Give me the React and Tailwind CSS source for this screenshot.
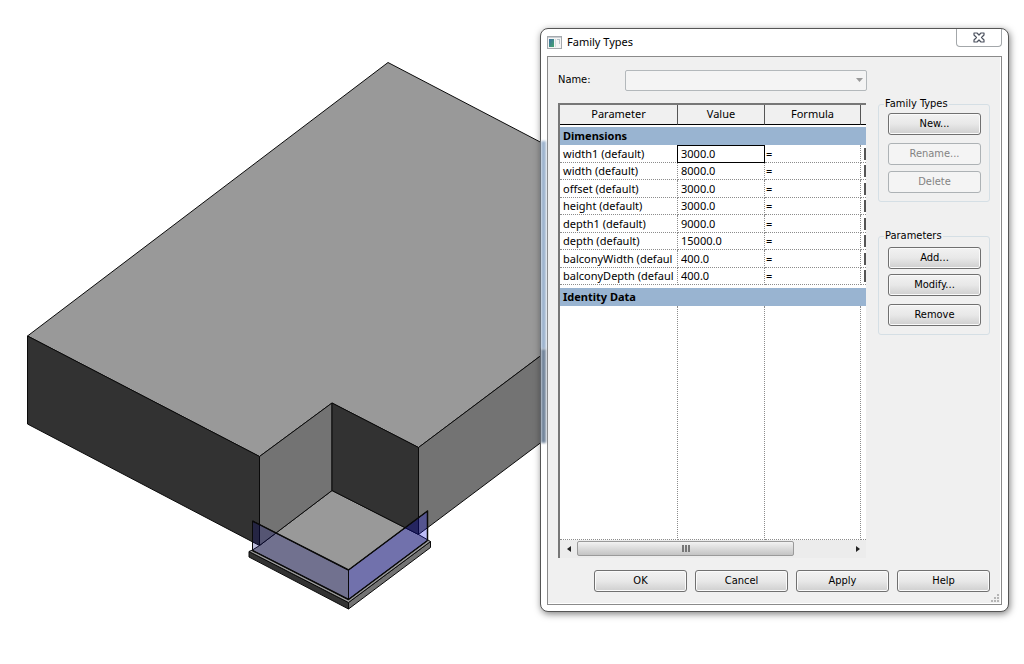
import React from "react";

const parameters = [
  ["width1 (default)", "3000.0"],
  ["width (default)", "8000.0"],
  ["offset (default)", "3000.0"],
  ["height (default)", "3000.0"],
  ["depth1 (default)", "9000.0"],
  ["depth (default)", "15000.0"],
  ["balconyWidth (defaul", "400.0"],
  ["balconyDepth (defaul", "400.0"],
];

function ModelView() {
  return (
    <svg viewBox="0 0 540 664" className="block w-full" role="img" aria-label="Building mass with corner balcony">
      <g stroke="#0a0a0a" strokeWidth="1" strokeLinejoin="round">
        <polygon points="388,62.5 27.5,336 259.5,456.5 332,403 418.5,447.5 545,352.5 545,144.5" fill="#999999" />
        <polygon points="27.5,336 259.5,456.5 259.5,545.5 27.5,424" fill="#323232" />
        <polygon points="418.5,447.5 545,352.5 545,439.5 418.5,534.5" fill="#737373" />
        <polygon points="249,551.5 348.5,602.5 348.5,609 249,557" fill="#323232" />
        <polygon points="348.5,602.5 430.5,541.5 430.5,547.5 348.5,609" fill="#737373" />
        <polygon points="249,551.5 252.5,550 259.5,545.5 332,490.5 418.5,534.5 430.5,541.5 348.5,602.5" fill="#999999" />
        <polygon points="259.5,456.5 332,403 332,490.5 259.5,545.5" fill="#737373" />
        <polygon points="332,403 418.5,447.5 418.5,534.5 332,490.5" fill="#323232" />
        <polygon points="252.5,521 348.5,570 348.5,599.5 252.5,550.5" fill="#000073" fillOpacity="0.26" />
        <polygon points="348.5,570 427.5,511 427.5,540.5 348.5,599.5" fill="#0000e5" fillOpacity="0.26" />
        <path d="M252.5 521 348.5 570 427.5 511V540M252.5 550.5 348.5 599.5 427.5 540.5" fill="none" strokeWidth="1.5" />
      </g>
    </svg>
  );
}

function PushButton({ children, disabled, className = "" }) {
  const look = disabled
    ? "border-[#adb2b5] bg-[#f4f4f4] text-[#838383]"
    : "border-[#707070] bg-linear-to-b from-[#f2f2f2] via-[#e8e8e8] to-[#cfcfcf] text-black shadow-[inset_0_0_0_1px_#fafafa]";
  return (
    <button
      type="button"
      disabled={disabled}
      className={`flex h-[22px] items-center justify-center rounded-[3px] border text-[11px] leading-4 ${look} ${className}`}
    >
      {children}
    </button>
  );
}

function Band({ children }) {
  return (
    <tr className="h-5">
      <th colSpan={4} scope="colgroup" className="border-t-2 border-white bg-[#99b4d1] bg-clip-padding px-[3px] text-left font-bold leading-4">
        {children}
      </th>
    </tr>
  );
}

function ParameterTable() {
  const dotted = "border-r border-dotted border-[#8c8c8c]";
  const head = "border-r border-[#555] p-0 pb-[2px] font-normal";
  return (
    <div className="border-l-2 border-t-2 border-[#777] bg-white">
      <table className="w-full table-fixed border-separate border-spacing-0 font-['Noto_Sans','Open_Sans',sans-serif] text-[11px] leading-4">
        <colgroup>
          <col className="w-[118px]" />
          <col className="w-[87px]" />
          <col />
          <col className="w-[5px]" />
        </colgroup>
        <thead>
          <tr className="h-5 bg-[#f0f0f0] [&>*]:border-b [&>*]:border-b-black">
            <th scope="col" className={head}>Parameter</th>
            <th scope="col" className={head}>Value</th>
            <th scope="col" className={head}>Formula</th>
            <td />
          </tr>
        </thead>
        <tbody>
          <Band>Dimensions</Band>
          {parameters.map(([name, value], i) => (
            <tr key={name} className="h-[17px] even:h-[18px] [&>td]:border-b [&>td]:border-dotted [&>td]:border-b-[#8c8c8c] [&>td]:p-0">
              <td className={dotted}>
                <div className="ml-[3px] h-4 whitespace-nowrap">{name}</div>
              </td>
              <td className={dotted}>
                <input
                  aria-label={name}
                  defaultValue={value}
                  className={`block h-4 w-full bg-white px-[3px] outline-none ${i === 0 ? "ring-1 ring-black" : ""}`}
                />
              </td>
              <td className={dotted}><div className="h-4 pl-px">=</div></td>
              <td><div className="ml-[3px] h-3 w-[2px] bg-[#555]" /></td>
            </tr>
          ))}
          <tr className="h-px"><td colSpan={4} className="p-0" /></tr>
          <Band>Identity Data</Band>
          <tr className="h-[234px] [&>td]:border-b [&>td]:border-dotted [&>td]:border-b-[#8c8c8c]">
            <td className={dotted} />
            <td className={dotted} />
            <td className={dotted} />
            <td />
          </tr>
        </tbody>
      </table>
      <div className="flex h-[18px] items-center bg-[#ececec] pb-px">
        <button type="button" aria-label="Scroll left" className="flex h-4 w-[17px] items-center justify-center">
          <svg viewBox="0 0 4 6" className="h-[6px] w-1"><path d="M4 0v6L0 3z" fill="#222" /></svg>
        </button>
        <div className="flex h-[15px] w-[217px] items-center justify-center gap-px rounded-[2px] border border-[#9a9a9a] bg-linear-to-b from-[#f2f2f2] to-[#c4c4c4]">
          <span className="h-[7px] w-[2px] bg-[#777]" />
          <span className="h-[7px] w-[2px] bg-[#777]" />
          <span className="h-[7px] w-[2px] bg-[#777]" />
        </div>
        <button type="button" aria-label="Scroll right" className="ml-auto flex h-4 w-[17px] items-center justify-center">
          <svg viewBox="0 0 4 6" className="h-[6px] w-1"><path d="M0 0v6l4-3z" fill="#222" /></svg>
        </button>
      </div>
    </div>
  );
}

function Group({ title, children, className = "" }) {
  return (
    <fieldset className="rounded-[3px] border border-[#d5dfe5] pb-2 pl-[9px] pr-2">
      <legend className="-ml-1 px-px text-[11px] leading-[14px]">{title}</legend>
      <div className={`flex flex-col ${className}`}>{children}</div>
    </fieldset>
  );
}

function FamilyTypesDialog() {
  return (
    <section
      role="dialog"
      aria-labelledby="dialog-title"
      className="relative mr-[15px] mt-7 w-[469px] shrink-0 rounded-lg border border-[#555] bg-white px-[6px] pb-[6px] shadow-[1px_2px_7px_rgba(0,0,0,0.5)]"
    >
      <div className="absolute left-0 top-28 h-[208px] w-[5px] bg-[#9fb5cf] blur-[1px]" />
      <div className="absolute left-0 top-80 h-[94px] w-[5px] bg-[#75879d] blur-[1px]" />
      <header className="flex h-[27px] items-start">
        <svg viewBox="0 0 15 13" className="mt-[7px] h-[13px] w-[15px]" aria-hidden="true">
          <defs>
            <linearGradient id="pane" x1="0" y1="0" x2="1" y2="1">
              <stop offset="0" stopColor="#3c6ea5" />
              <stop offset="1" stopColor="#43a56b" />
            </linearGradient>
          </defs>
          <rect x=".5" y=".5" width="14" height="12" fill="#f4f4f4" stroke="#a5a9ad" />
          <path d="M1 1.5h13" stroke="#c9ced3" />
          <rect x="2" y="3" width="5" height="8" fill="url(#pane)" />
          <path d="M8.500 3v8" stroke="#d5dadd" />
          <path d="M10 3.5h3M12.5 4v4" stroke="#b8c4cc" />
        </svg>
        <h1 id="dialog-title" className="ml-[5px] mt-[5px] font-['Noto_Sans','Open_Sans',sans-serif] text-[11px] leading-4">Family Types</h1>
        <button
          type="button"
          aria-label="Close"
          className="ml-auto flex h-[18px] w-[46px] items-center justify-center rounded-b-[4px] border border-t-0 border-[#a3a7aa] bg-white"
        >
          <svg viewBox="0 0 12 11" className="h-[11px] w-3">
            <path d="M1 1h3l2 2L8 1h3v2L8.500 5.500 11 8v2H8L6 8 4 10H1V8L3.500 5.500 1 3z" fill="#fff" stroke="#4d5360" strokeWidth="1.2" strokeLinejoin="round" />
          </svg>
        </button>
      </header>
      <form className="border border-[#8a8a8a] bg-[#f0f0f0] pl-[10px] pr-[11px] pt-3 shadow-[inset_-1px_-1px_0_#fff]">
        <div className="flex h-[22px] items-center">
          <label htmlFor="family-name" className="w-[67px] text-[11px] leading-4">Name:</label>
          <div className="grid h-[21px] w-[242px] items-center">
            <select
              id="family-name"
              disabled
              className="col-start-1 row-start-1 h-[21px] w-full appearance-none rounded-[2px] border border-[#b3b8bb] bg-[#f4f4f4]"
            />
            <svg viewBox="0 0 7 4" className="col-start-1 row-start-1 mr-1 h-1 w-[7px] justify-self-end">
              <path d="M0 0h7L3.500 4z" fill="#999" />
            </svg>
          </div>
        </div>
        <div className="mt-3 flex items-start">
          <div className="w-[308px]"><ParameterTable /></div>
          <div className="-mt-[6px] ml-3 flex min-w-0 flex-1 flex-col gap-[27px]">
            <Group title="Family Types" className="pt-[2px]">
              <PushButton>New...</PushButton>
              <PushButton disabled className="mt-2">Rename...</PushButton>
              <PushButton disabled className="mt-[6px]">Delete</PushButton>
            </Group>
            <Group title="Parameters" className="pt-1">
              <PushButton>Add...</PushButton>
              <PushButton className="mt-[5px]">Modify...</PushButton>
              <PushButton className="mt-2">Remove</PushButton>
            </Group>
          </div>
        </div>
        <div className="mt-3 flex justify-end gap-2">
          <PushButton className="w-[93px]">OK</PushButton>
          <PushButton className="w-[93px]">Cancel</PushButton>
          <PushButton className="w-[93px]">Apply</PushButton>
          <PushButton className="w-[93px]">Help</PushButton>
        </div>
        <div className="flex h-3 items-end justify-end pb-[2px]">
          <svg viewBox="0 0 8 8" className="-mr-[9px] h-2 w-2" fill="#b5b5b5" aria-hidden="true">
            <path d="M6 0h2v2H6zM3 3h2v2H3zM6 3h2v2H6zM0 6h2v2H0zM3 6h2v2H3zM6 6h2v2H6z" />
          </svg>
        </div>
      </form>
    </section>
  );
}

export default function App() {
  return (
    <main className="flex min-h-screen items-start overflow-hidden bg-white font-['DejaVu_Sans_Condensed','DejaVu_Sans',sans-serif] text-black">
      <div className="min-w-0 flex-1"><ModelView /></div>
      <FamilyTypesDialog />
    </main>
  );
}
